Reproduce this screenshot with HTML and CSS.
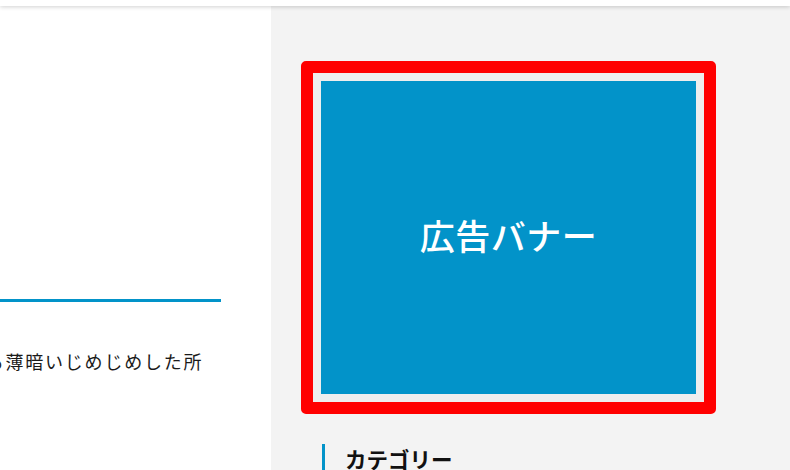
FILE: index.html
```html
<!DOCTYPE html>
<html lang="ja">
<head>
<meta charset="utf-8">
<title>広告バナー</title>
<link rel="stylesheet" href="styles.css">
</head>
<body>
<header class="site-header"></header>
<div class="layout">
  <main class="main">
    <div class="main-inner">
      <div class="rule"></div>
      <p class="body-text">何でも薄暗いじめじめした所</p>
    </div>
  </main>
  <aside class="sidebar">
    <div class="ad-frame">
      <div class="ad-banner">広告バナー</div>
    </div>
    <h3 class="widget-title">カテゴリー</h3>
  </aside>
</div>
</body>
</html>
```
FILE: styles.css
```css
html, body {
  margin: 0;
  padding: 0;
}
body {
  width: 790px;
  height: 470px;
  overflow: hidden;
  background: #ffffff;
  font-family: "Noto Sans CJK JP", "Noto Sans", sans-serif;
  color: #1a1a1a;
}
.site-header {
  height: 6px;
  background: #ffffff;
  box-shadow: 0 1px 4px rgba(0, 0, 0, 0.18);
  position: relative;
  z-index: 2;
}
.layout {
  display: flex;
  height: 464px;
}
.main {
  width: 271px;
  background: #ffffff;
  overflow: hidden;
  flex: none;
}
.main-inner {
  margin-left: -54px;
  width: 275px;
  padding-top: 293px;
}
.rule {
  border-bottom: 3px solid #0293c9;
}
.body-text {
  margin: 43px 0 0;
  font-size: 18px;
  line-height: 32px;
  letter-spacing: 1.8px;
  white-space: nowrap;
  color: #1a1a1a;
}
.sidebar {
  flex: 1;
  background: #f3f3f3;
  padding: 55px 0 0 30px;
}
.ad-frame {
  width: 375px;
  height: 313px;
  padding: 8px;
  border: 12px solid #ff0000;
  border-radius: 5px;
  background: #eeeeee;
}
.ad-banner {
  width: 100%;
  height: 100%;
  box-sizing: border-box;
  padding-bottom: 6px;
  background: #0293c9;
  color: #ffffff;
  display: flex;
  align-items: center;
  justify-content: center;
  font-size: 35px;
  font-weight: 500;
  letter-spacing: 0.5px;
}
.widget-title {
  margin: 30px 0 0 21px;
  border-left: 3px solid #0293c9;
  padding-left: 20px;
  font-size: 21.5px;
  font-weight: 700;
  line-height: 30px;
  color: #111111;
}
```
